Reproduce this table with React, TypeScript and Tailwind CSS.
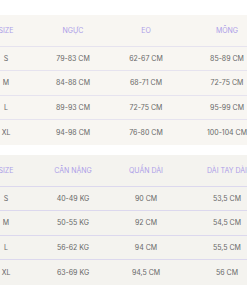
import React from "react";

type Table = {
    head: string[];
    rows: string[][];
    bg: string;
    line: string;
};

const tables: Table[] = [
    {
        head: ["SIZE", "NGỰC", "EO", "MÔNG"],
        rows: [
            ["S", "79-83 CM", "62-67 CM", "85-89 CM"],
            ["M", "84-88 CM", "68-71 CM", "72-75 CM"],
            ["L", "89-93 CM", "72-75 CM", "95-99 CM"],
            ["XL", "94-98 CM", "76-80 CM", "100-104 CM"],
        ],
        bg: "bg-[#f8f6f2]",
        line: "border-[#e6e3ef]",
    },
    {
        head: ["SIZE", "CÂN NẶNG", "QUẦN DÀI", "DÀI TAY DÀI"],
        rows: [
            ["S", "40-49 KG", "90 CM", "53,5 CM"],
            ["M", "50-55 KG", "92 CM", "54,5 CM"],
            ["L", "56-62 KG", "94 CM", "55,5 CM"],
            ["XL", "63-69 KG", "94,5 CM", "56 CM"],
        ],
        bg: "bg-[#f4f3ef]",
        line: "border-[#dcd8ee]",
    },
];

function SizeTable({ head, rows, bg, line }: Table) {
    return (
        <div className={`${bg} h-[130px] flex flex-col`}>
            <div className={`grid grid-cols-[52px_82px_64px_98px] ml-[-20px] h-[32px] items-center border-b ${line} text-[#ad9ee8]`}>
                {head.map((h) => (
                    <div key={h} className="text-center">{h}</div>
                ))}
            </div>
            {rows.map((r, i) => (
                <div
                    key={r[0]}
                    className={`grid grid-cols-[52px_82px_64px_98px] ml-[-20px] h-[25px] items-center text-[#676767] ${i < rows.length - 1 ? `border-b ${line}` : ""}`}
                >
                    {r.map((c, j) => (
                        <div key={j} className="text-center">{c}</div>
                    ))}
                </div>
            ))}
        </div>
    );
}

export default function App() {
    return (
        <div className="w-[247px] h-[296px] overflow-hidden bg-white pt-[15px] flex flex-col gap-[10px] text-[7px] font-['Inter',sans-serif] leading-none">
            {tables.map((t) => (
                <SizeTable key={t.head[1]} {...t} />
            ))}
        </div>
    );
}
